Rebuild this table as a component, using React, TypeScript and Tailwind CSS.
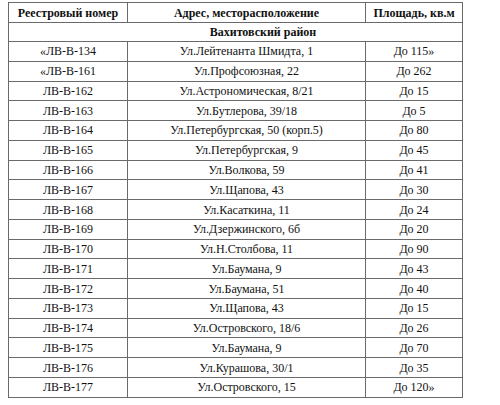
import React from "react";

const rows: [string, string, string][] = [
  ["«ЛВ-В-134", "Ул.Лейтенанта Шмидта, 1", "До 115»"],
  ["«ЛВ-В-161", "Ул.Профсоюзная, 22", "До 262"],
  ["ЛВ-В-162", "Ул.Астрономическая, 8/21", "До 15"],
  ["ЛВ-В-163", "Ул.Бутлерова, 39/18", "До 5"],
  ["ЛВ-В-164", "Ул.Петербургская, 50 (корп.5)", "До 80"],
  ["ЛВ-В-165", "Ул.Петербургская, 9", "До 45"],
  ["ЛВ-В-166", "Ул.Волкова, 59", "До 41"],
  ["ЛВ-В-167", "Ул.Щапова, 43", "До 30"],
  ["ЛВ-В-168", "Ул.Касаткина, 11", "До 24"],
  ["ЛВ-В-169", "Ул.Дзержинского, 6б", "До 20"],
  ["ЛВ-В-170", "Ул.Н.Столбова, 11", "До 90"],
  ["ЛВ-В-171", "Ул.Баумана, 9", "До 43"],
  ["ЛВ-В-172", "Ул.Баумана, 51", "До 40"],
  ["ЛВ-В-173", "Ул.Щапова, 43", "До 15"],
  ["ЛВ-В-174", "Ул.Островского, 18/6", "До 26"],
  ["ЛВ-В-175", "Ул.Баумана, 9", "До 70"],
  ["ЛВ-В-176", "Ул.Курашова, 30/1", "До 35"],
  ["ЛВ-В-177", "Ул.Островского, 15", "До 120»"],
];

const cell =
  "border border-[#6a6a6a] text-center p-0 font-['Liberation_Serif',serif] text-[12px] leading-none text-[#111111]";

export default function App() {
  return (
    <div className="w-[500px] h-[405px] bg-white pt-[2px] pl-[8px]">
      <table className="table-fixed border-collapse w-[454px] font-['Liberation_Serif',serif] text-[12px]">
        <colgroup>
          <col className="w-[119px]" />
          <col className="w-[238px]" />
          <col className="w-[97px]" />
        </colgroup>
        <tbody>
          <tr className="h-[20px]">
            <td className={`${cell} font-bold`}>Реестровый номер</td>
            <td className={`${cell} font-bold`}>Адрес, месторасположение</td>
            <td className={`${cell} font-bold`}>Площадь, кв.м</td>
          </tr>
          <tr className="h-[19px]">
            <td colSpan={3} className={`${cell} font-bold pl-[55px]`}>
              Вахитовский район
            </td>
          </tr>
          {rows.map(([a, b, c], i) => (
            <tr key={i} className="h-[19.78px]">
              <td className={cell}>{a}</td>
              <td className={cell}>{b}</td>
              <td className={cell}>{c}</td>
            </tr>
          ))}
        </tbody>
      </table>
    </div>
  );
}
